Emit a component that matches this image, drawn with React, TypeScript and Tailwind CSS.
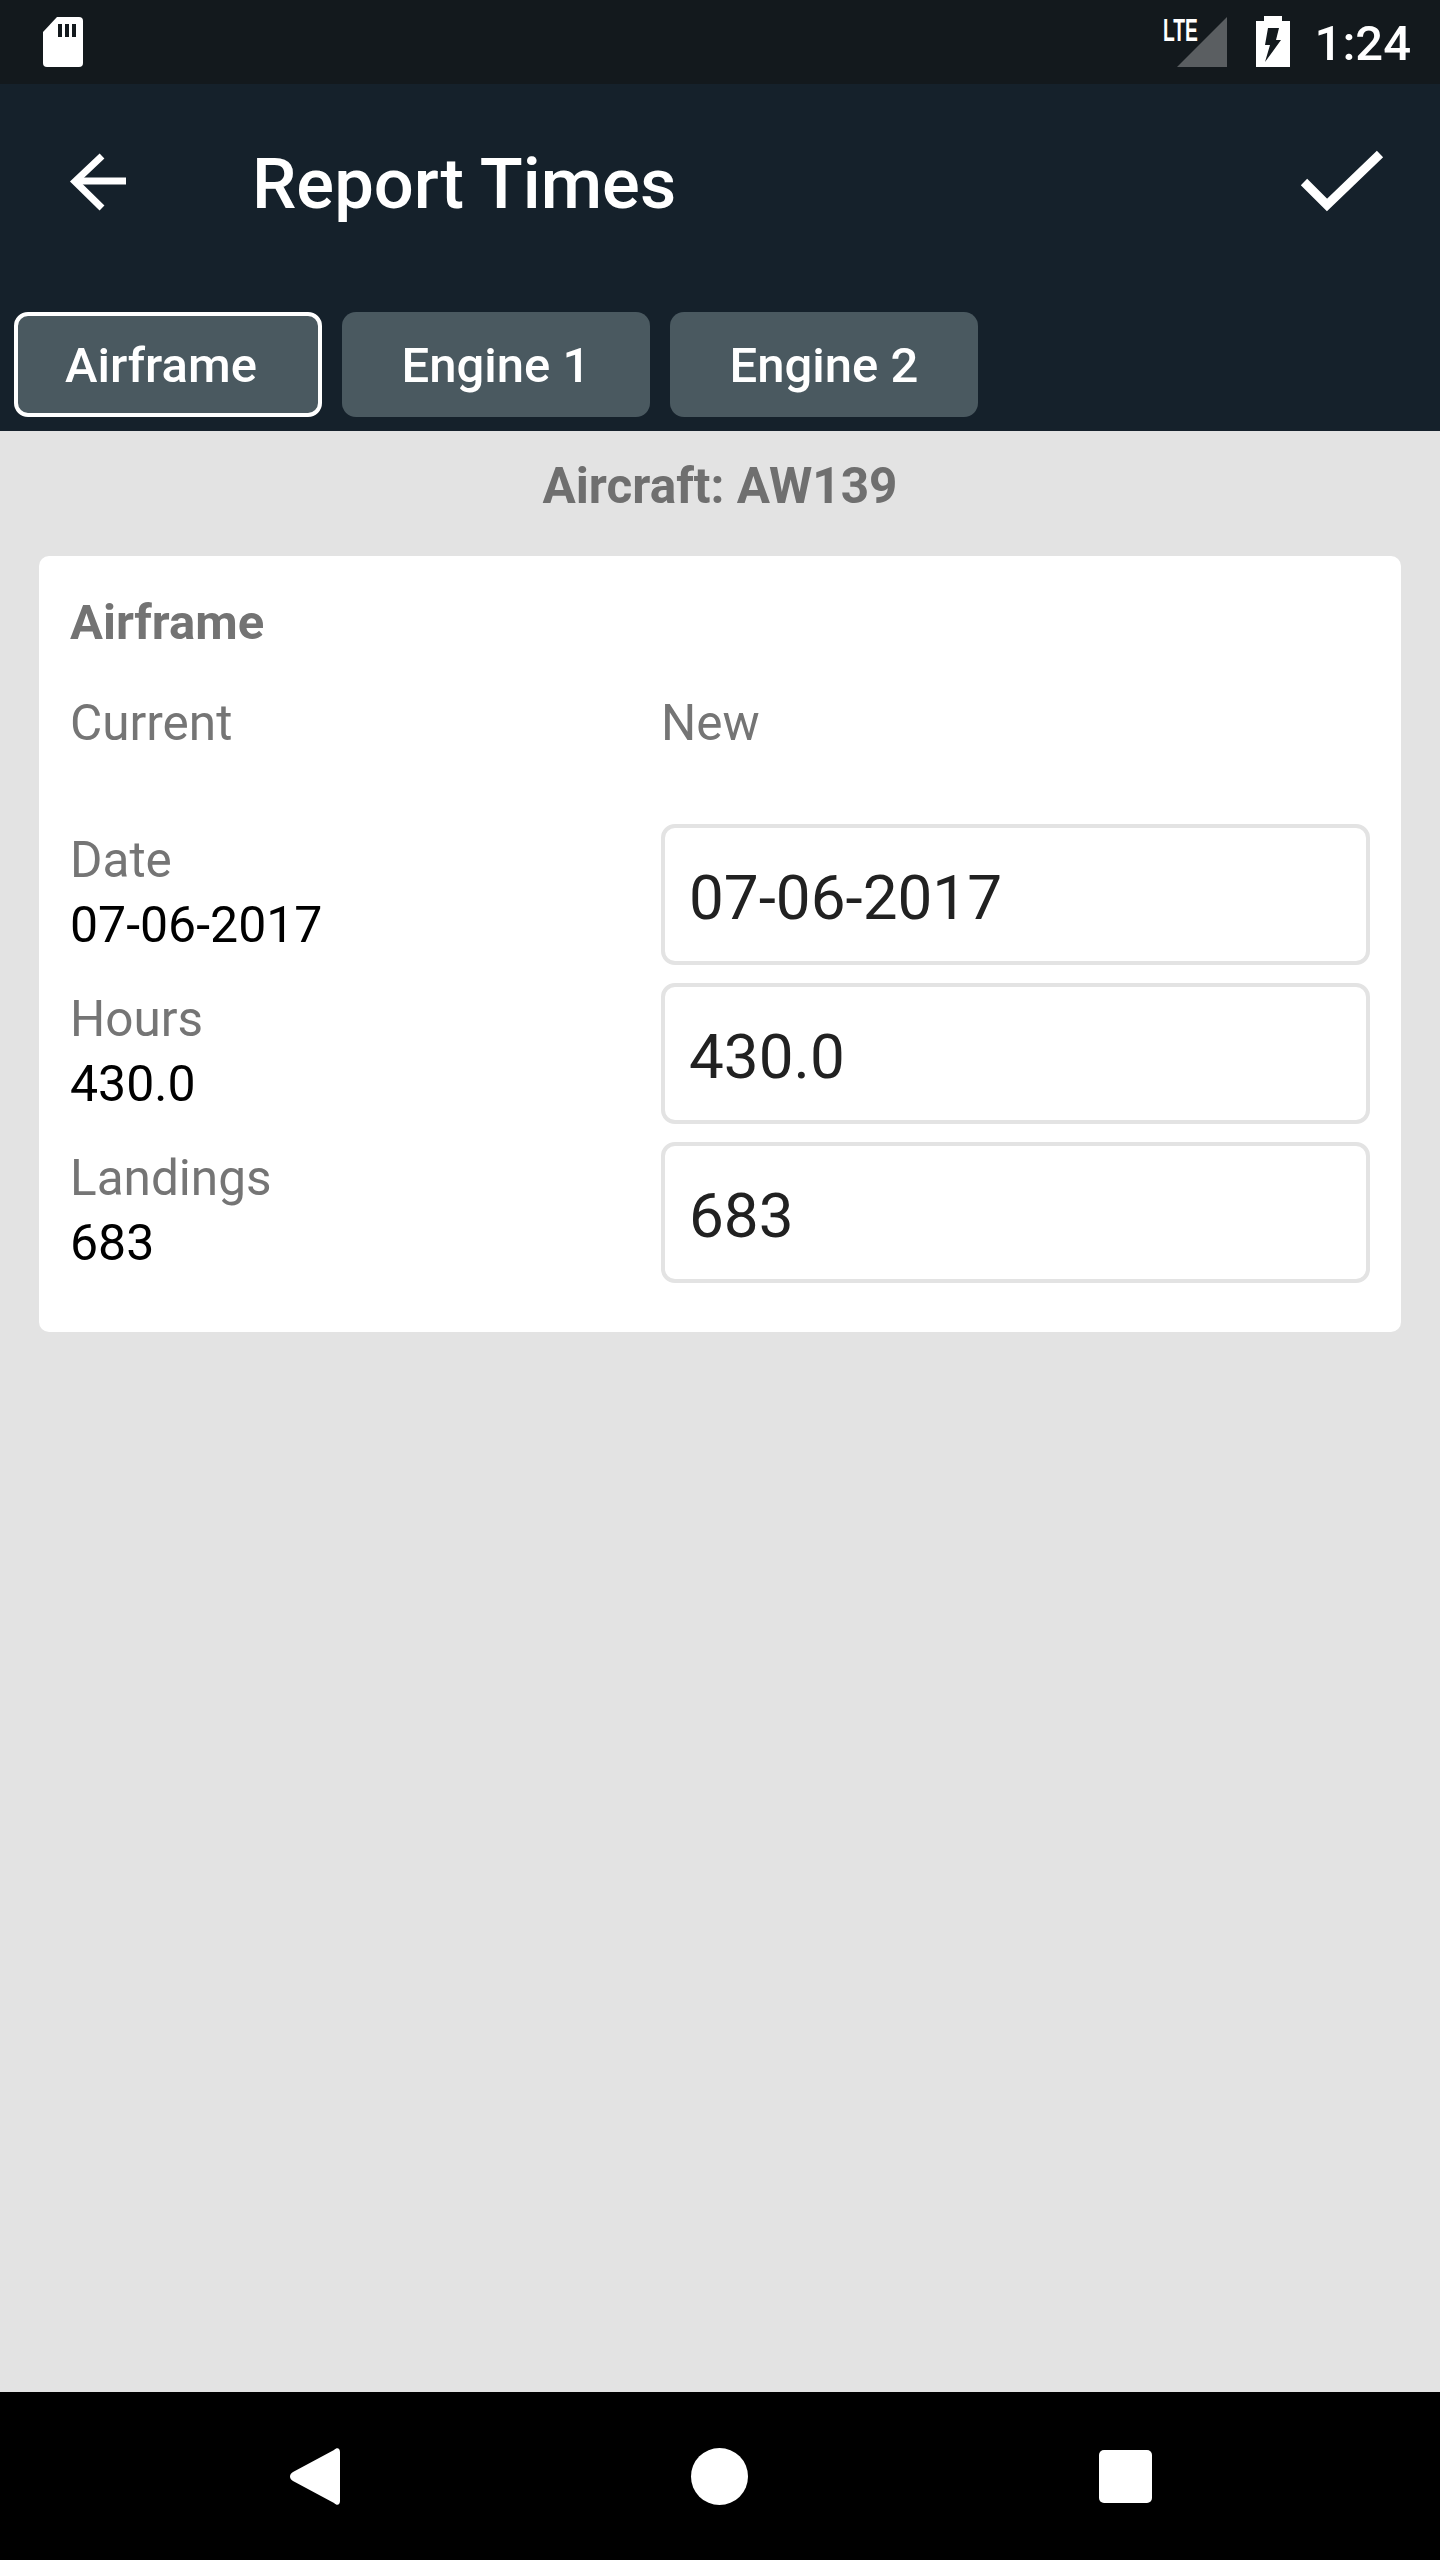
const font = "font-['Roboto',sans-serif]";

const rows = [
  { label: "Date", value: "07-06-2017" },
  { label: "Hours", value: "430.0" },
  { label: "Landings", value: "683" },
];

function StatusBar() {
  return (
    <div className="flex h-[84px] items-start justify-between bg-[#13191d] pl-[43px] pr-[29px] pt-[16px]">
      <svg width="40" height="52" viewBox="0 0 40 52" className="mt-px">
        <path
          d="M14 0H36a4 4 0 0 1 4 4V46a4 4 0 0 1-4 4H4a4 4 0 0 1-4-4V15Z"
          fill="#fff"
        />
        <path d="M15 7h4v13h-4zM22 7h4v13h-4zM29 7h4v13h-4z" fill="#13191d" />
      </svg>
      <div className="flex items-start">
        <div className="relative h-[51px] w-[64px]">
          <svg width="50" height="50" viewBox="0 0 50 50" className="absolute bottom-0 right-0">
            <path d="M50 0V50H0Z" fill="#5a5e61" />
          </svg>
          <span className="absolute left-0 top-0 origin-left text-[31px] font-bold leading-[30px] text-white [font-family:'Liberation_Sans',sans-serif] [transform:scaleX(0.62)]">
            LTE
          </span>
        </div>
        <svg width="34" height="51" viewBox="0 0 34 51" className="ml-[29px]">
          <path d="M8 0H26V5H34V51H0V5H8Z" fill="#fff" />
          <path d="M12 12H23L20 24H25L9 46 14 29H9Z" fill="#13191d" />
        </svg>
        <span className="ml-[25px] text-[49px] font-medium leading-[56px] text-white">1:24</span>
      </div>
    </div>
  );
}

function AppBar() {
  return (
    <div className="bg-[#15212b] pb-[14px]">
      <div className="flex h-[196px] items-center pl-[68px] pr-[54px]">
        <svg width="60" height="60" viewBox="0 0 60 60" fill="none" stroke="#fff" strokeWidth="7">
          <path d="M58 29H8" />
          <path d="M34 4 7 29.500 34 56" />
        </svg>
        <h1 className="ml-[124px] flex-1 pt-[6px] text-[70.500px] font-medium text-white">Report Times</h1>
        <svg width="88" height="66" viewBox="0 0 88 66" fill="none" stroke="#fff" strokeWidth="9" className="-mt-[2px]">
          <path d="M6 34 29 57 82 6" />
        </svg>
      </div>
      <div className="mt-[32px] flex gap-[20px] pl-[14px]">
        <div className="flex h-[105px] w-[308px] items-center justify-center rounded-[14px] border-4 border-white bg-[#4a5960] pr-[14px] pt-[3px] text-[49px] font-medium text-white">
          Airframe
        </div>
        <div className="flex h-[105px] w-[308px] items-center justify-center rounded-[14px] bg-[#4a5960] pt-[3px] text-[49px] font-medium text-white">
          Engine 1
        </div>
        <div className="flex h-[105px] w-[308px] items-center justify-center rounded-[14px] bg-[#4a5960] pt-[3px] text-[49px] font-medium text-white">
          Engine 2
        </div>
      </div>
    </div>
  );
}

function Card() {
  return (
    <div className="mx-[39px] rounded-[10px] bg-white pb-[49px] pl-[31px] pr-[31px] pt-[34px]">
      <div className="text-[49px] font-bold leading-[65px] text-[#737373]">Airframe</div>
      <div className="mt-[36px] flex text-[49.500px] leading-[65px] text-[#757575]">
        <div className="w-[591px]">Current</div>
        <div>New</div>
      </div>
      <div className="mt-[68px] flex flex-col gap-[18px]">
        {rows.map((r) => (
          <div key={r.label} className="flex items-center">
            <div className="w-[591px] pb-[3px] text-[49.500px] leading-[65px]">
              <div className="text-[#757575]">{r.label}</div>
              <div className="text-[50px] text-black">{r.value}</div>
            </div>
            <div className="flex h-[141px] flex-1 items-center rounded-[14px] border-4 border-[#e3e3e3] pl-[24px] pt-[5px] text-[62px] text-[#212121]">
              {r.value}
            </div>
          </div>
        ))}
      </div>
    </div>
  );
}

function NavBar() {
  return (
    <div className="flex h-[168px] items-center justify-center gap-[351px] bg-black pl-[1px]">
      <svg width="50" height="57" viewBox="0 0 50 57">
        <path
          d="M50 4C50 0 47-1 44 2L3 24C-1 26-1 31 3 33L44 55C47 58 50 57 50 53Z"
          fill="#fff"
        />
      </svg>
      <div className="h-[57px] w-[57px] rounded-full bg-white" />
      <div className="h-[53px] w-[53px] rounded-[5px] bg-white" />
    </div>
  );
}

export default function App() {
  return (
    <div className={`flex h-[2560px] w-[1440px] flex-col bg-[#e3e3e3] ${font}`}>
      <StatusBar />
      <AppBar />
      <div className="flex-1">
        <div className="pb-[37px] pt-[23px] text-center text-[49.500px] font-bold leading-[65px] text-[#6f6f6f]">
          Aircraft: AW139
        </div>
        <Card />
      </div>
      <NavBar />
    </div>
  );
}
